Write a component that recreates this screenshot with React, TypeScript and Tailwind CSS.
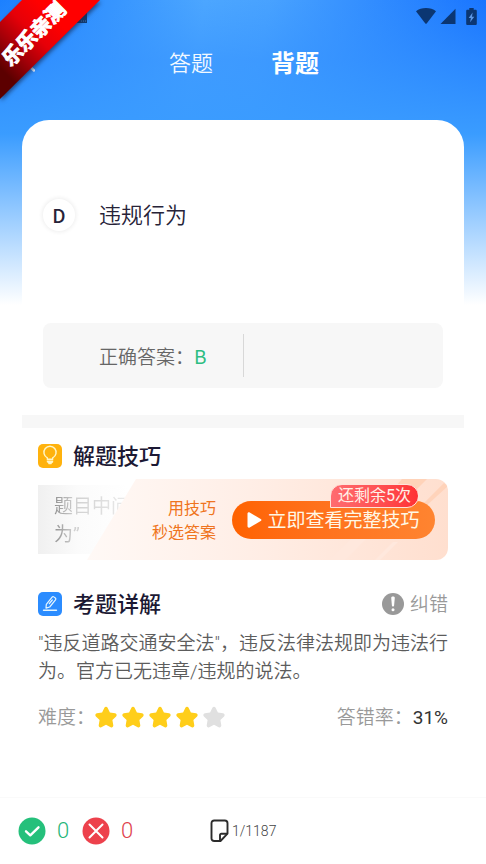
import React, { useState } from 'react';

const STAR_PATH = 'M12 1.8c.7 0 1.3.4 1.6 1l2.3 4.7 5.2.8c1.5.2 2.1 2 1 3.1l-3.7 3.7.9 5.2c.2 1.5-1.3 2.6-2.6 1.9L12 19.7l-4.7 2.5c-1.3.7-2.8-.4-2.6-1.9l.9-5.2-3.7-3.7c-1.1-1.1-.5-2.9 1-3.1l5.2-.8 2.3-4.7c.3-.6.9-1 1.6-1Z';

const StatusIcons: React.FC = () => (
    <div className="flex items-center text-[#0b3672]">
        <svg width="20" height="16" viewBox="0 0 20 16" fill="currentColor" aria-hidden="true">
            <path d="M0 3.2C2.6 1 6.200 0 10 0s7.400 1 10 3.200L10.700 15.500a1 1 0 0 1-1.400 0Z" />
        </svg>
        <svg className="ml-1" width="16" height="16" viewBox="0 0 16 16" fill="currentColor" aria-hidden="true">
            <path d="M15.500.8V16H.5Z" />
        </svg>
        <svg className="ml-[10px]" width="11" height="17" viewBox="0 0 11 17" aria-hidden="true">
            <path fill="currentColor" d="M3.300 0h4.400v1.800H9.500c.8 0 1.300.5 1.300 1.200v12.700c0 .8-.5 1.300-1.300 1.300h-8C.7 17 .2 16.500.2 15.700V3c0-.7.5-1.200 1.300-1.200h1.800Z" />
            <path fill="#5b96e4" d="M6.600 4.600 2.700 10h2.200l-.8 4.300L8.300 8.700H6Z" />
        </svg>
    </div>
);

const Ribbon: React.FC = () => (
    <div className="absolute left-0 top-0 size-[104px] pointer-events-none">
        <div className="absolute inset-0 drop-shadow-[1px_2px_2px_rgba(20,40,80,0.7)]">
            <div className="size-[100px] [clip-path:polygon(22px_0,100px_0,0_99px,0_22px)] bg-[linear-gradient(45deg,#5c0000_16%,#a00008_32%,#e60008_50%,#ff0000_68%)]" />
        </div>
        <span className="absolute -left-[6px] top-[26px] w-20 text-center -rotate-45 text-[20px] leading-4 font-bold text-white whitespace-nowrap [-webkit-text-stroke:1px_#fff]">
            乐乐亲测
        </span>
    </div>
);

const BulbIcon: React.FC = () => (
    <svg width="24" height="24" viewBox="0 0 24 24" fill="none" aria-hidden="true">
        <rect width="24" height="24" rx="5" fill="#ffb20d" />
        <path d="M9.300 15.300v-1.500a6.100 6.100 0 1 1 5.400 0v1.500Z" stroke="#fff6c8" strokeWidth="1.400" strokeLinejoin="round" />
        <path d="M8.800 16.400h6.400v1.300c0 .8-.5 1.200-1.200 1.200l-.6 1.300h-2.800l-.6-1.300c-.7 0-1.200-.4-1.200-1.200Z" fill="#fff6c8" />
    </svg>
);

const PencilIcon: React.FC = () => (
    <svg width="24" height="24" viewBox="0 0 24 24" fill="none" aria-hidden="true">
        <rect width="24" height="24" rx="5" fill="#2b8cff" />
        <path d="m8.300 12.300 5.800-7.200c.5-.6 1.200-.7 1.800-.2l1.400 1.100c.6.5.7 1.200.2 1.800l-5.800 7.200-3.700 1.100Z" stroke="#e6f6ff" strokeWidth="1.200" strokeLinejoin="round" />
        <path d="m11.300 11.700 3-3.700" stroke="#e6f6ff" strokeWidth="1.200" strokeLinecap="round" />
        <path d="M5.500 18.200h13" stroke="#e6f6ff" strokeWidth="1.400" strokeLinecap="round" />
    </svg>
);

const TipBanner: React.FC = () => (
    <div className="grid items-center">
        <div className="[grid-area:1/1] h-[69px] pl-4 pt-2 bg-[linear-gradient(90deg,#f0f0f0_0px,#fbfbfb_40px,#ffffff_90px)]">
            <p className="w-20 text-[19px] leading-7 bg-clip-text text-transparent whitespace-nowrap bg-[linear-gradient(90deg,#909090_0px,#d0d0d0_20px,#eeeeee_80px)]">
                题目中问
                <br />
                为”
            </p>
        </div>
        <div className="[grid-area:1/1] relative ml-[49px] h-[81px] flex items-center justify-end pr-[13px]">
            <div className="absolute inset-0 rounded-r-xl overflow-hidden [clip-path:polygon(49px_0,100%_0,100%_100%,0_100%)] bg-[linear-gradient(90deg,#fff9f6_0%,#ffeee6_45%,#ffdfcf_100%)]">
                <svg className="absolute right-0 top-0" width="130" height="81" viewBox="0 0 130 81" aria-hidden="true">
                    <path d="M84 0h25L62 47H44Z" fill="#ffcdb0" opacity=".75" />
                    <path d="m126 4-24 24h5L130 7Z" fill="#ffcdb0" opacity=".7" />
                    <path d="M12 81h15l30-30H42Z" fill="#ffe8dd" />
                    <path d="M57 81h5l18-18h-5Z" fill="#ffe8dd" />
                </svg>
            </div>
            <p className="relative mr-4 mt-[2px] text-right text-[16px] leading-6 text-[#ef7420]">
                用技巧
                <br />
                秒选答案
            </p>
            <button className="relative flex items-center justify-center h-[38px] w-[203px] rounded-full bg-linear-to-r from-[#ff6200] to-[#ff8430] text-[19px] leading-7 text-[#fff8e6]">
                <svg className="mr-[5px]" width="15" height="16" viewBox="0 0 15 16" fill="#fff" aria-hidden="true">
                    <path d="M.5 1.800C.5.6 1.700 0 2.700.6l11 6.300c1 .5 1 1.700 0 2.200l-11 6.300c-1 .6-2.200 0-2.200-1.200Z" />
                </svg>
                <span className="pt-[2px]">立即查看完整技巧</span>
                <span className="absolute right-4 -top-[17px] h-6 px-[7px] rounded-full rounded-bl-none border border-[#ffe3da] bg-linear-to-r from-[#ff6b70] to-[#ff3034] text-[16px] leading-[22px] text-[#fff0e8] whitespace-nowrap">
                    还剩余5次
                </span>
            </button>
        </div>
    </div>
);

const Difficulty: React.FC<{ level: number }> = ({ level }) => (
    <div className="-ml-px flex items-center gap-[3px]" role="img" aria-label={`${level} / 5`}>
        {[1, 2, 3, 4, 5].map(n => (
            <svg key={n} width="24" height="24" viewBox="0 0 24 24" fill={n <= level ? '#ffce1a' : '#e0e0e0'}>
                <path d={STAR_PATH} />
            </svg>
        ))}
    </div>
);

const App: React.FC = () => {
    const [tab, setTab] = useState<'quiz' | 'study'>('study');

    const tabClass = (active: boolean) =>
        active ? 'text-[24px] leading-8 font-bold text-white' : 'text-[22px] leading-8 font-[350] text-[#f2f9ff]';

    return (
        <div className="relative min-h-screen flex flex-col font-['Roboto','Noto_Sans_CJK_SC',sans-serif] bg-white">
            <div className="absolute inset-x-0 top-0 h-[305px] bg-[linear-gradient(180deg,rgba(54,148,255,0)_0px,rgba(54,148,255,0.6)_60px,#3a9cff_134px,#ffffff_305px),linear-gradient(100deg,#1c80ff_0%,#4ca6ff_38%,#48a2ff_50%,#1773ff_92%)]" />

            <header className="relative h-[120px]">
                <div className="h-8 pr-[9px] flex items-center justify-end">
                    <StatusIcons />
                </div>
                <svg className="absolute left-[77px] top-2" width="10" height="15" viewBox="0 0 10 15" aria-hidden="true">
                    <path d="M0 0h8l2 2v13H0Z" fill="#123b70" />
                    <path d="M4 13h1m1 0h1m1 0h1" stroke="#4d80bb" />
                </svg>
                <button aria-label="返回" className="absolute left-[23px] top-[52px]">
                    <svg width="12" height="20" viewBox="0 0 12 20" fill="none" stroke="#e4f1ff" strokeWidth="2.500" strokeLinecap="round">
                        <path d="m10 2-8 8 9 8.500" />
                    </svg>
                </button>
                <nav className="pt-4 pl-[2px] flex items-center justify-center gap-[58px]">
                    <button className={tabClass(tab === 'quiz')} onClick={() => setTab('quiz')}>答题</button>
                    <button className={tabClass(tab === 'study')} onClick={() => setTab('study')}>背题</button>
                </nav>
                <Ribbon />
            </header>

            <main className="relative flex-1 mx-[22px] rounded-t-[27px] bg-white">
                <section className="px-[21px] pt-[78px]">
                    <button className="flex items-center text-[#272338]">
                        <span className="size-8 rounded-full flex items-center justify-center font-['Noto_Sans_CJK_SC',sans-serif] text-[19px] leading-8 font-medium shadow-[0_0_4px_1px_rgba(0,0,0,0.07)]">D</span>
                        <span className="ml-6 pt-[2px] text-[22px] leading-8 font-[350]">违规行为</span>
                    </button>
                    <div className="mt-[91px] h-[65px] flex items-center rounded-lg bg-[#f7f7f7]">
                        <p className="w-1/2 pl-14 pt-[2px] text-[19px] leading-7 font-[350] text-[#666]">
                            正确答案：<span className="font-['Noto_Sans_CJK_SC',sans-serif] font-normal text-[#2dbd82]">B</span>
                        </p>
                        <div className="w-px h-[43px] bg-[#d8d8d8]" />
                    </div>
                </section>

                <div className="mt-[27px] h-[13px] bg-[#f7f7f7]" />

                <section className="px-4 pt-3">
                    <div className="flex items-center">
                        <BulbIcon />
                        <h2 className="ml-[11px] pt-[2px] text-[22px] leading-[30px] font-medium text-[#1c1934]">解题技巧</h2>
                    </div>
                    <div className="mt-[7px]">
                        <TipBanner />
                    </div>
                </section>

                <section className="px-4 pt-7">
                    <div className="flex items-center">
                        <PencilIcon />
                        <h2 className="ml-[11px] pt-[2px] text-[22px] leading-[30px] font-medium text-[#1c1934]">考题详解</h2>
                        <button className="ml-auto flex items-center text-[19px] leading-7 font-[350] text-[#999]">
                            <svg className="mr-[6px]" width="22" height="22" viewBox="0 0 22 22" aria-hidden="true">
                                <circle cx="11" cy="11" r="11" fill="#999" />
                                <path d="M9.200 4.800c0-1.800 3.600-1.800 3.600 0l-.7 7.800c-.1 1.300-2.100 1.300-2.200 0Z" fill="#fff" />
                                <circle cx="11" cy="16.700" r="1.500" fill="#fff" />
                            </svg>
                            <span className="pt-[2px]">纠错</span>
                        </button>
                    </div>
                    <p className="-mr-2 mt-[10px] text-[19px] leading-7 font-[350] text-[#5c5c5c]">
                        "违反道路交通安全法"，违反法律法规即为违法行为。官方已无违章/违规的说法。
                    </p>
                    <div className="mt-4 flex items-center text-[19px] leading-7 font-[350] text-[#999]">
                        <span className="pt-[2px]">难度：</span>
                        <Difficulty level={4} />
                        <span className="ml-auto pt-[2px]">答错率：<span className="font-normal text-[#333]">31%</span></span>
                    </div>
                </section>
            </main>

            <footer className="relative h-[67px] px-[18px] flex items-center border-t border-[#fafafa] bg-white">
                <svg width="28" height="28" viewBox="0 0 28 28" fill="none" aria-hidden="true">
                    <circle cx="14" cy="14" r="13.500" fill="#25c07b" />
                    <path d="m8 14.300 4.300 4 8.200-8" stroke="#fff" strokeWidth="2.400" strokeLinecap="round" strokeLinejoin="round" />
                </svg>
                <span className="w-[14px] ml-[10px] text-center text-[22px] leading-8 font-[350] text-[#25b578]">0</span>
                <svg className="ml-3" width="28" height="28" viewBox="0 0 28 28" fill="none" aria-hidden="true">
                    <circle cx="14" cy="14" r="13.500" fill="#ed414c" />
                    <path d="m7.500 7.500 13 13m0-13-13 13" stroke="#fff" strokeWidth="2" strokeLinecap="round" />
                </svg>
                <span className="w-[14px] ml-[10px] text-center text-[22px] leading-8 font-[350] text-[#e0414c]">0</span>
                <button className="ml-[76px] flex items-center text-[14px] leading-5 font-light text-[#444]">
                    <svg className="mr-[3px]" width="19" height="24" viewBox="0 0 19 24" fill="none" stroke="#2c2c2c" strokeWidth="1.900" strokeLinejoin="round" aria-hidden="true">
                        <path d="M4.200 1.500h10.600c1.700 0 2.700 1 2.700 2.700v10.500l-7 7.300H4.200c-1.700 0-2.700-1-2.700-2.700V4.200c0-1.700 1-2.700 2.700-2.700Z" />
                        <path d="M10 21.500v-5.500c0-.8.500-1.300 1.300-1.300h6" />
                    </svg>
                    1/1187
                </button>
            </footer>
        </div>
    );
};

export default App;
